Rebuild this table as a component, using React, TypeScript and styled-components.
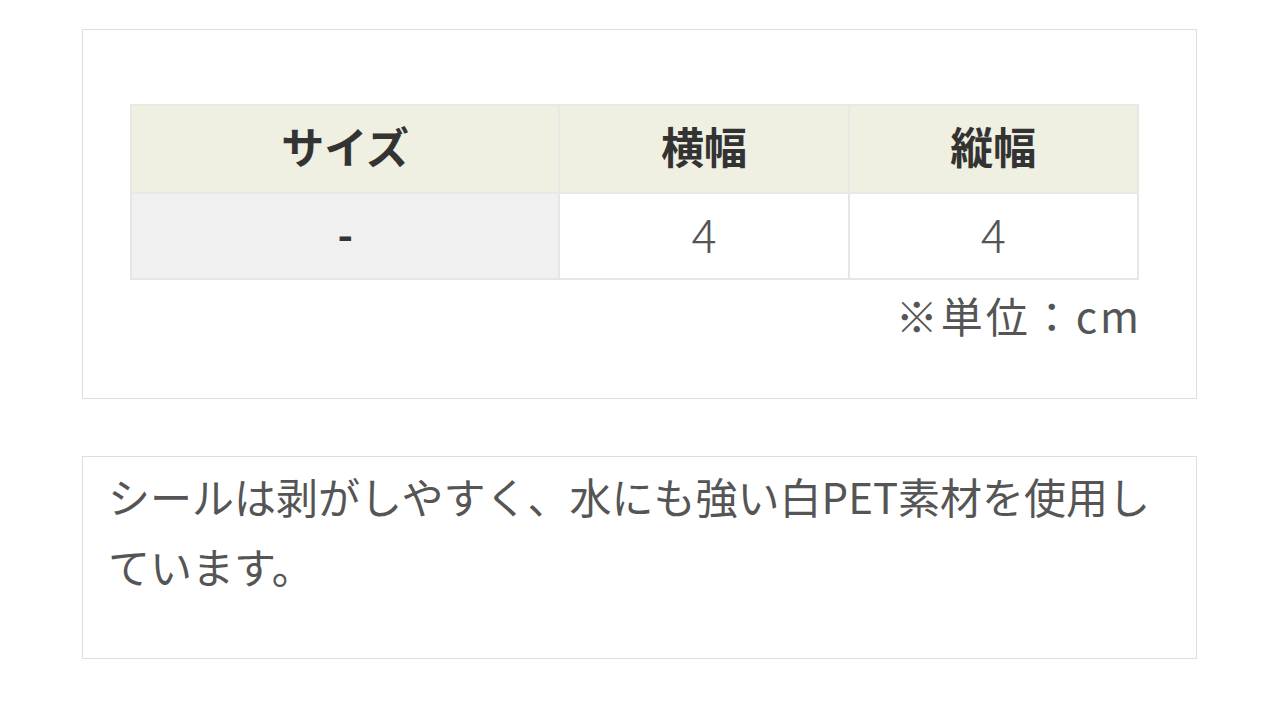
import styled, { createGlobalStyle } from "styled-components";

const GlobalStyle = createGlobalStyle`
  body {
    margin: 0;
    background: #ffffff;
    font-family: "Noto Sans CJK JP", "Noto Sans", sans-serif;
    color: #444;
  }
`;

const Page = styled.div`
  width: 1280px;
  padding: 29px 83px 0 82px;
  box-sizing: border-box;
  display: flex;
  flex-direction: column;
  gap: 57px;
`;

const SizeBox = styled.section`
  border: 1px solid #dedede;
  padding: 74px 57px 58px 47px;
  display: flex;
  flex-direction: column;
`;

const SizeTable = styled.table`
  width: 100%;
  border-collapse: collapse;
  table-layout: fixed;
`;

const HeadCell = styled.th<{ $w: string }>`
  width: ${(p) => p.$w};
  height: 78px;
  padding: 0 0 8px;
  background: #efefe2;
  border: 2px solid #e8e8e4;
  font-size: 43px;
  font-weight: 700;
  color: #333;
  text-align: center;
  vertical-align: middle;
`;

const BodyCell = styled.td<{ $label?: boolean }>`
  height: 76px;
  padding: 0 0 8px;
  background: ${(p) => (p.$label ? "#f0f0f0" : "#ffffff")};
  border: 2px solid #e6e6e6;
  font-size: ${(p) => (p.$label ? "42px" : "47px")};
  font-weight: ${(p) => (p.$label ? 700 : 300)};
  color: ${(p) => (p.$label ? "#333" : "#555")};
  text-align: center;
  vertical-align: middle;
`;

const Unit = styled.p`
  align-self: flex-end;
  margin: 10px -3px 0 0;
  font-size: 42px;
  line-height: 50px;
  color: #555;
  letter-spacing: 3px;
`;

const NoteBox = styled.section`
  border: 1px solid #dedede;
  padding: 4px 26px 57px 25px;
`;

const NoteText = styled.p`
  margin: 0;
  font-size: 42px;
  line-height: 70px;
  color: #555;
`;

export default function App() {
  return (
    <Page>
      <GlobalStyle />
      <SizeBox>
        <SizeTable>
          <thead>
            <tr>
              <HeadCell $w="42.6%">サイズ</HeadCell>
              <HeadCell $w="28.7%">横幅</HeadCell>
              <HeadCell $w="28.7%">縦幅</HeadCell>
            </tr>
          </thead>
          <tbody>
            <tr>
              <BodyCell $label>-</BodyCell>
              <BodyCell>4</BodyCell>
              <BodyCell>4</BodyCell>
            </tr>
          </tbody>
        </SizeTable>
        <Unit>※単位：cm</Unit>
      </SizeBox>
      <NoteBox>
        <NoteText>
          シールは剥がしやすく、水にも強い白PET素材を使用しています。
        </NoteText>
      </NoteBox>
    </Page>
  );
}
